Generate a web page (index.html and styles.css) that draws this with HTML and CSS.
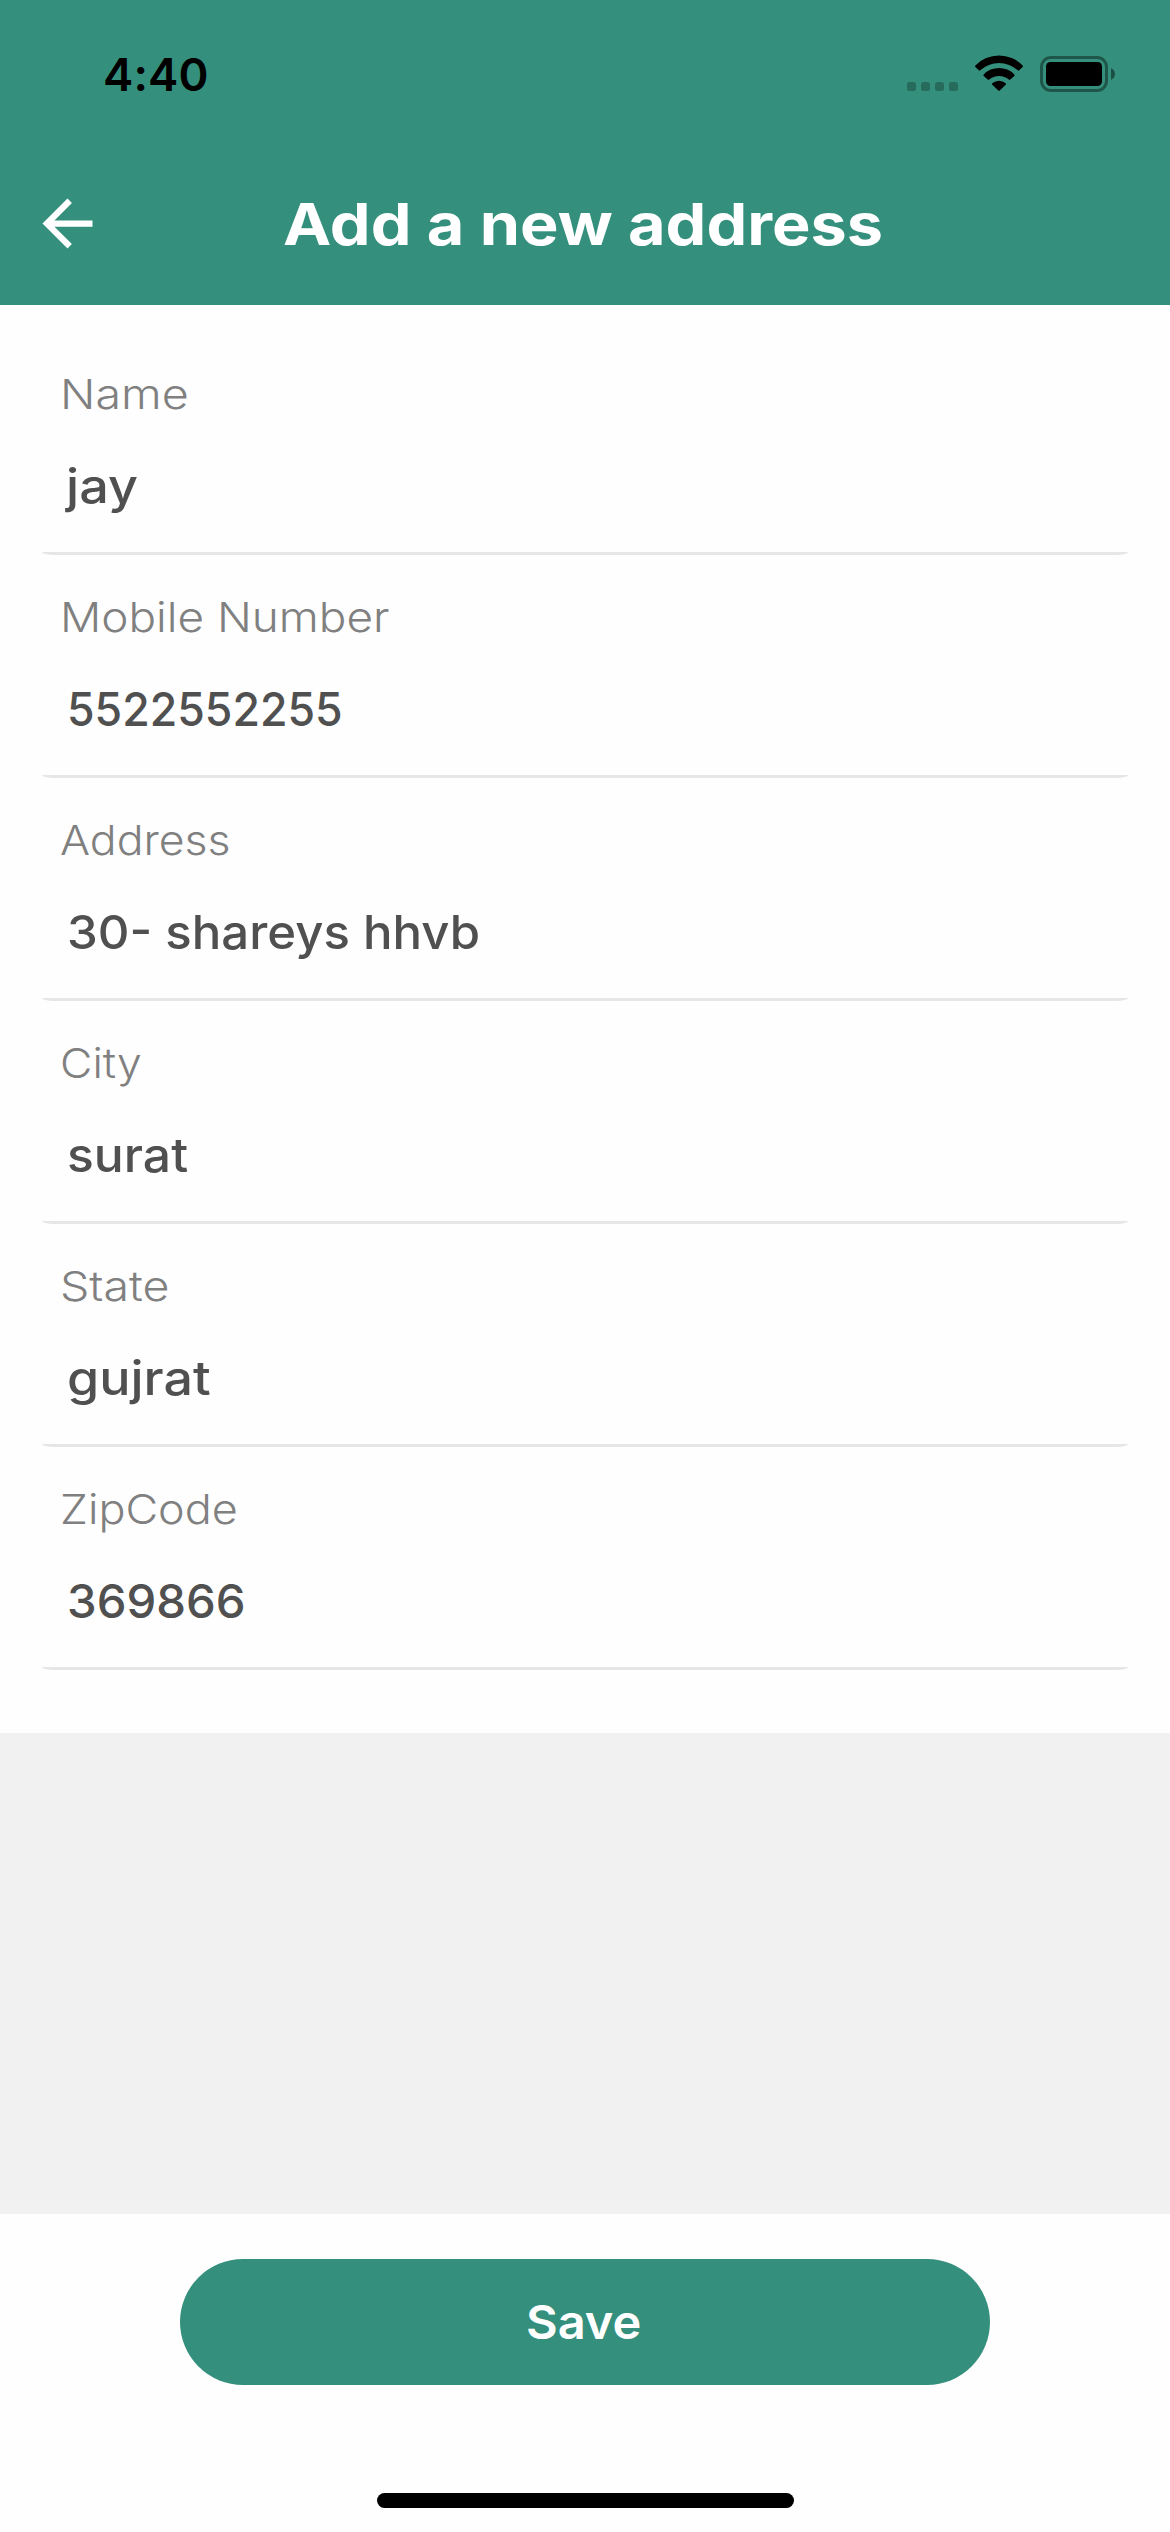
FILE: index.html
```html
<!DOCTYPE html>
<html lang="en">
<head>
<meta charset="utf-8">
<meta name="viewport" content="width=device-width">
<title>Add a new address</title>
<link rel="stylesheet" href="styles.css">
</head>
<body>
<div class="screen">
  <header class="header">
    <div class="status">
      <span class="time">4:40</span>
      <svg class="status-icons" viewBox="0 0 208 37" aria-hidden="true">
        <g opacity=".25">
          <rect x="0" y="27" width="9" height="9" rx="2.5"/>
          <rect x="14" y="27" width="9" height="9" rx="2.5"/>
          <rect x="28" y="27" width="9" height="9" rx="2.5"/>
          <rect x="42" y="27" width="9" height="9" rx="2.5"/>
        </g>
        <path d="M68.4 10.4A33 33 0 0 1 115.6 10.4Q116.4 11.2 115.6 12L112.2 15.3Q111.5 16 110.8 15.3A28 28 0 0 0 73.2 15.3Q72.5 16 71.8 15.3L68.4 12Q67.6 11.2 68.4 10.4Z"/>
        <path d="M76.7 19.5A21 21 0 0 1 107.3 19.5Q108 20.2 107.3 20.9L103.3 24.6Q102.6 25.3 101.8 24.6A15 15 0 0 0 82.2 24.6Q81.4 25.3 80.7 24.6L76.7 20.9Q76 20.2 76.7 19.5Z"/>
        <path d="M85.3 28.3A10 10 0 0 1 98.7 28.3Q99.4 29 98.7 29.7L92.7 35.6Q92 36.3 91.3 35.6L85.3 29.7Q84.6 29 85.3 28.3Z"/>
        <rect x="134.5" y="2.5" width="65" height="33" rx="9.5" fill="none" stroke="#000" stroke-width="3" opacity=".4"/>
        <rect x="139" y="7" width="56" height="24" rx="4.5"/>
        <path d="M204 13C209.3 15.5 209.3 22.5 204 25Z" opacity=".45"/>
      </svg>
    </div>
    <div class="nav">
      <svg class="back" viewBox="0 0 24 24" aria-label="Back"><path d="M20 11H7.83l5.59-5.59L12 4l-8 8 8 8 1.410-1.410L7.83 13H20v-2z"/></svg>
      <h1 class="title">Add a new address</h1>
    </div>
  </header>

  <main class="form">
    <div class="field name"><div class="label">Name</div><div class="value">jay</div><div class="line"></div></div>
    <div class="field mobile"><div class="label">Mobile Number</div><div class="value">5522552255</div><div class="line"></div></div>
    <div class="field address"><div class="label">Address</div><div class="value">30- shareys hhvb</div><div class="line"></div></div>
    <div class="field city"><div class="label">City</div><div class="value">surat</div><div class="line"></div></div>
    <div class="field state"><div class="label">State</div><div class="value">gujrat</div><div class="line"></div></div>
    <div class="field zip"><div class="label">ZipCode</div><div class="value">369866</div><div class="line"></div></div>
  </main>

  <footer class="footer">
    <button class="save" type="button"><span class="save-text">Save</span></button>
    <div class="home-bar"></div>
  </footer>
</div>
</body>
</html>
```
FILE: styles.css
```css
* { box-sizing: border-box; }

body {
  margin: 0;
  background: #f1f1f1;
  font-family: Inter, "Liberation Sans", sans-serif;
}

.screen {
  display: flex;
  flex-direction: column;
  width: 1170px;
  height: 2532px;
}

/* Header */
.header {
  height: 305px;
  background: #34907c;
}

.status {
  display: flex;
  justify-content: space-between;
  align-items: flex-start;
  height: 144px;
  padding: 55px 55px 0 103px;
}

.time {
  font-size: 45.5px;
  font-weight: 600;
  line-height: 40px;
  letter-spacing: 0.13px;
}

.status-icons {
  width: 208px;
  height: 37px;
}

.nav {
  display: grid;
  grid-template-columns: 253px max-content;
  align-items: start;
  padding: 42px 30px 0;
}

.back {
  width: 75px;
  height: 75px;
  fill: #fff;
}

.title {
  margin: 3px 0 0;
  color: #fff;
  font-size: 58px;
  font-weight: 700;
  line-height: 70px;
  white-space: nowrap;
  transform: scaleX(1.116);
  transform-origin: left;
}

/* Form */
.form {
  height: 1428px;
  padding: 27px 42px 0;
  background: #fefefe;
}

.field {
  display: flex;
  flex-direction: column;
  height: 223px;
  padding-top: 37px;
}

.label,
.value {
  align-self: flex-start;
  white-space: nowrap;
  transform-origin: left;
}

.label {
  margin-left: 18px;
  color: #808080;
  font-size: 41.5px;
  font-weight: 300;
  line-height: 50px;
}

.value {
  margin: 39px 0 38px 25px;
  color: #505050;
  font-size: 47px;
  font-weight: 500;
  line-height: 56px;
}

.line {
  height: 3px;
  background: #e6e6e6;
  border-radius: 0 0 12px 12px / 0 0 3px 3px;
}

/* Wide letterforms, fitted per field */
.name .label { transform: scaleX(1.123); }
.name .value { margin-left: 24px; transform: scaleX(1.11); }
.mobile .label { transform: scaleX(1.105); }
.mobile .value { transform: scaleX(0.95); }
.address .label { transform: scaleX(1.074); }
.address .value { transform: scaleX(1.045); }
.city .label { transform: scaleX(1.072); }
.city .value { transform: scaleX(1.06); }
.state .label { transform: scaleX(1.12); }
.state .value { transform: scaleX(1.106); }
.zip .label { transform: scaleX(1.082); }
.zip .value { transform: scaleX(1.006); }

/* Footer */
.footer {
  display: flex;
  flex-direction: column;
  align-items: center;
  height: 318px;
  margin-top: auto;
  padding-top: 45px;
  background: #fefefe;
}

.save {
  width: 810px;
  height: 126px;
  padding: 0 3px 2px 0;
  border: 0;
  border-radius: 63px;
  background: #34907c;
  color: #fff;
  font-family: inherit;
  font-size: 47px;
  font-weight: 600;
}

.save-text {
  display: inline-block;
  transform: scaleX(1.037);
}

.home-bar {
  width: 417px;
  height: 15px;
  margin-top: 108px;
  border-radius: 8px;
  background: #000;
}
```
